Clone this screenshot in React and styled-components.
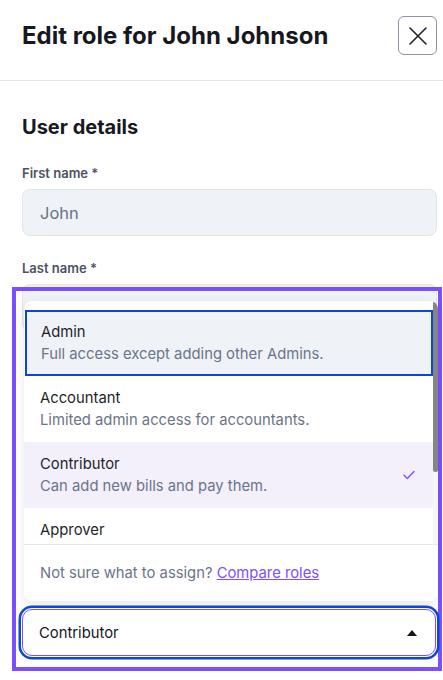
import React from "react";
import styled, { createGlobalStyle } from "styled-components";

const GlobalStyle = createGlobalStyle`
  html, body {
    margin: 0;
    padding: 0;
    background: #ffffff;
    font-family: Inter, "Open Sans", sans-serif;
    color: #1b1d26;
  }
  * {
    box-sizing: border-box;
  }
`;

const roles = [
  { name: "Admin", desc: "Full access except adding other Admins.", focused: true },
  { name: "Accountant", desc: "Limited admin access for accountants." },
  { name: "Contributor", desc: "Can add new bills and pay them.", selected: true },
  { name: "Approver", desc: "Can approve bills before they are paid." },
  { name: "Clerk", desc: "Can add bills for review." },
];

const CloseIcon = () => (
  <svg width="20" height="20" viewBox="0 0 20 20" fill="none">
    <path d="M2 2L18 18M18 2L2 18" stroke="#1f2128" strokeWidth="1.6" strokeLinecap="round" />
  </svg>
);

const CheckIcon = () => (
  <svg width="12" height="10" viewBox="0 0 12 10" fill="none">
    <path d="M1 5.2L4.3 8.5L11 1.5" stroke="#7c52ff" strokeWidth="1.4" strokeLinecap="round" strokeLinejoin="round" />
  </svg>
);

const App = () => {
  return (
    <>
      <GlobalStyle />
      <Page>
        <Header>
          <Title>Edit role for John Johnson</Title>
          <CloseButton aria-label="Close">
            <CloseIcon />
          </CloseButton>
        </Header>
        <Body>
          <SectionTitle>User details</SectionTitle>
          <Field>
            <Label>First name *</Label>
            <Input>John</Input>
          </Field>
          <Field>
            <Label>Last name *</Label>
            <Input>Johnson</Input>
          </Field>
          <Highlight>
            <Popup>
              <ListArea>
                <OptionList>
                  {roles.map((role) => (
                    <Option key={role.name} $focused={role.focused} $selected={role.selected}>
                      <OptionText>
                        <OptionName>{role.name}</OptionName>
                        <OptionDesc>{role.desc}</OptionDesc>
                      </OptionText>
                      {role.selected && <CheckIcon />}
                    </Option>
                  ))}
                </OptionList>
                <ScrollTrack>
                  <ScrollThumb />
                </ScrollTrack>
              </ListArea>
              <PopupFooter>
                Not sure what to assign? <CompareLink href="#">Compare roles</CompareLink>
              </PopupFooter>
            </Popup>
            <SelectButton>
              <span>Contributor</span>
              <Caret />
            </SelectButton>
          </Highlight>
        </Body>
      </Page>
    </>
  );
};

export default App;

const Page = styled.div`
  width: 443px;
  height: 680px;
  overflow: hidden;
  background: #ffffff;
`;

const Header = styled.header`
  display: flex;
  align-items: center;
  justify-content: space-between;
  padding: 16px 6px 25px 22px;
  border-bottom: 1px solid #e4e7ec;
`;

const Title = styled.h1`
  margin: 0;
  font-size: 24px;
  font-weight: 700;
  line-height: 30px;
  color: #17181f;
`;

const CloseButton = styled.button`
  width: 39px;
  height: 39px;
  display: flex;
  align-items: center;
  justify-content: center;
  padding: 0;
  background: #ffffff;
  border: 1px solid #8b93a5;
  border-radius: 6px;
`;

const Body = styled.main`
  display: flex;
  flex-direction: column;
  padding: 33px 6px 0 22px;
`;

const SectionTitle = styled.h2`
  margin: 0 0 24px;
  font-size: 20px;
  font-weight: 700;
  line-height: 26px;
  color: #17181f;
`;

const Field = styled.div`
  display: flex;
  flex-direction: column;
  gap: 7px;
  margin-bottom: 23px;
`;

const Label = styled.label`
  font-size: 13px;
  font-weight: 600;
  line-height: 18px;
  color: #4b5262;
`;

const Input = styled.div`
  height: 47px;
  display: flex;
  align-items: center;
  padding: 0 17px;
  background: #eff2f6;
  border: 1px solid #e1e5eb;
  border-radius: 8px;
  font-size: 16.5px;
  color: #6a7285;
`;

const Highlight = styled.div`
  position: relative;
  z-index: 2;
  display: flex;
  flex-direction: column;
  margin: -67px -5px 0 -10px;
  padding: 10px 0 11px 0;
  border: 4px solid #7b4fff;
`;

const Popup = styled.div`
  display: flex;
  flex-direction: column;
  margin-left: 8px;
  background: #ffffff;
  border-radius: 8px;
  box-shadow: 0 4px 14px rgba(30, 35, 60, 0.1);
  overflow: hidden;
`;

const ListArea = styled.div`
  display: flex;
  height: 243px;
`;

const OptionList = styled.ul`
  flex: 1;
  list-style: none;
  margin: 0;
  padding: 9px 0 0;
  overflow: hidden;
`;

const ScrollTrack = styled.div`
  width: 5px;
  background: #f6f6f7;
`;

const ScrollThumb = styled.div`
  height: 171px;
  background: #858585;
  border-radius: 3px;
`;

const Option = styled.li`
  display: flex;
  align-items: center;
  justify-content: space-between;
  padding: 11px 18px 11px 16px;
  background: ${({ $focused, $selected }) =>
    $focused ? "#eff3f7" : $selected ? "#f3f0fc" : "#ffffff"};
  box-shadow: ${({ $focused }) => ($focused ? "inset 0 0 0 2px #0b47d1" : "none")};
  margin-left: ${({ $focused }) => ($focused ? "1px" : "0")};
`;

const OptionText = styled.div`
  display: flex;
  flex-direction: column;
`;

const OptionName = styled.span`
  font-size: 14.8px;
  line-height: 22px;
  color: #1d1f29;
`;

const OptionDesc = styled.span`
  font-size: 14.8px;
  line-height: 22px;
  color: #6b7489;
`;

const PopupFooter = styled.div`
  padding: 17px 16px;
  border-top: 1px solid #e5e7eb;
  font-size: 14.8px;
  line-height: 22px;
  color: #6b7489;
`;

const CompareLink = styled.a`
  color: #7b4fff;
  text-decoration: underline;
`;

const SelectButton = styled.div`
  height: 47px;
  display: flex;
  align-items: center;
  justify-content: space-between;
  margin: 8px 2px 0 6px;
  padding: 0 18px 0 16px;
  background: #ffffff;
  border: 1px solid #7b4fff;
  border-radius: 10px;
  box-shadow: 0 0 0 1px #ffffff, 0 0 0 3.5px #0b47d1;
  font-size: 14.8px;
  color: #15161c;
`;

const Caret = styled.span`
  width: 0;
  height: 0;
  border-left: 5px solid transparent;
  border-right: 5px solid transparent;
  border-bottom: 6px solid #15161c;
`;
